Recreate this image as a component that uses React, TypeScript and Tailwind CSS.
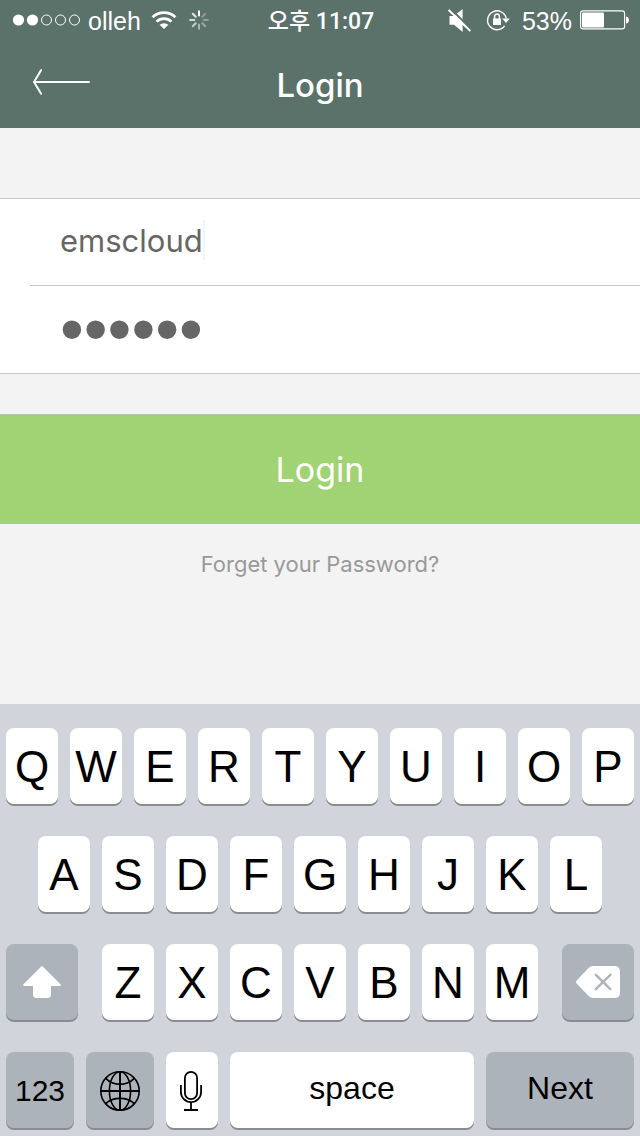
import { useState } from "react";
import type { ReactNode } from "react";

const spokes = [
  { angle: 0, opacity: 1 },
  { angle: 45, opacity: 0.3 },
  { angle: 90, opacity: 0.35 },
  { angle: 135, opacity: 0.4 },
  { angle: 180, opacity: 0.5 },
  { angle: 225, opacity: 0.65 },
  { angle: 270, opacity: 0.75 },
  { angle: 315, opacity: 0.85 },
];

function SignalDots() {
  return (
    <svg className="h-3 w-[68px]" viewBox="0 0 68 12" fill="none" stroke="currentColor" aria-hidden="true">
      <circle cx="6.5" cy="6" r="5.6" fill="currentColor" stroke="none" />
      <circle cx="20.5" cy="6" r="5.6" fill="currentColor" stroke="none" />
      <circle cx="34.5" cy="6" r="5" />
      <circle cx="48.5" cy="6" r="5" />
      <circle cx="62.5" cy="6" r="5" />
    </svg>
  );
}

function WifiIcon() {
  return (
    <svg className="h-[18px] w-[26px]" viewBox="0 0 26 18" fill="none" stroke="currentColor" aria-hidden="true">
      <path d="M1.6 6.2A16.5 16.5 0 0 1 24.4 6.2" strokeWidth="2.9" />
      <path d="M5.6 10.6A10.8 10.8 0 0 1 20.4 10.6" strokeWidth="2.6" />
      <path d="M13 18L8.6 13.8A6.8 6.8 0 0 1 17.4 13.8Z" fill="currentColor" stroke="none" />
    </svg>
  );
}

function SpinnerIcon() {
  return (
    <svg className="size-5" viewBox="0 0 20 20" stroke="currentColor" strokeWidth="2" strokeLinecap="round" aria-hidden="true">
      {spokes.map((s) => (
        <path key={s.angle} d="M10 1.2V5.4" opacity={s.opacity} transform={`rotate(${s.angle} 10 10)`} />
      ))}
    </svg>
  );
}

function MuteIcon() {
  return (
    <svg className="h-[23px] w-6" viewBox="0 0 24 23" aria-hidden="true">
      <path d="M1.5 7H6L14.6 0V23L6 15.8H1.5Z" fill="currentColor" />
      <path d="M1.6 -1L24 20.6" stroke="#5b726b" strokeWidth="2" />
      <path d="M0.6 1L22.4 22" stroke="currentColor" strokeWidth="2" />
    </svg>
  );
}

function RotationLockIcon() {
  return (
    <svg className="h-[22px] w-6" viewBox="0 0 24 22" fill="none" aria-hidden="true">
      <path d="M20.2 9.4A9.4 9.4 0 1 0 18.6 16.8" stroke="currentColor" strokeWidth="1.4" />
      <path d="M16.2 9.6H23.8L20 14Z" fill="currentColor" />
      <rect x="7" y="9.6" width="8" height="6.4" rx="0.6" fill="currentColor" />
      <path d="M8.6 10V7.6A2.4 2.6 0 0 1 13.4 7.6V10" stroke="currentColor" strokeWidth="1.5" />
    </svg>
  );
}

function BatteryIcon() {
  return (
    <svg className="h-5 w-[50px]" viewBox="0 0 50 20" fill="none" aria-hidden="true">
      <rect x="0.6" y="0.9" width="44" height="18" rx="2.4" stroke="currentColor" strokeWidth="1.1" />
      <rect x="2" y="2.4" width="22" height="15" rx="1" fill="currentColor" />
      <path d="M46 6.4C50 7 50 13 46 13.6Z" fill="currentColor" />
    </svg>
  );
}

function BackArrow() {
  return (
    <svg className="h-[26px] w-[58px]" viewBox="0 0 58 26" fill="none" stroke="currentColor" strokeWidth="2" strokeLinecap="round" strokeLinejoin="round" aria-hidden="true">
      <path d="M57 13H2M9 1.2L2 13L9 24.6" />
    </svg>
  );
}

function ShiftIcon() {
  return (
    <svg className="h-8 w-10" viewBox="0 0 40 32" fill="#fff" aria-hidden="true">
      <path d="M19.3 0.4Q20 -0.2 20.7 0.4L38.7 18.4Q39.4 20 37.6 20H29V28.6Q29 32 25.6 32H14.4Q11 32 11 28.6V20H2.4Q0.6 20 1.3 18.4Z" />
    </svg>
  );
}

function DeleteIcon() {
  return (
    <svg className="h-8 w-11" viewBox="0 0 44 32" fill="none" aria-hidden="true">
      <path d="M0.6 17.4Q-0.4 16 0.6 14.6L12.6 2Q14.4 0 17 0H38.5Q44 0 44 5.5V26.5Q44 32 38.5 32H17Q14.4 32 12.6 30Z" fill="#fff" />
      <path d="M19.8 8.8L34.4 23.2M34.4 8.8L19.8 23.2" stroke="#b0b3b8" strokeWidth="2.4" strokeLinecap="round" />
    </svg>
  );
}

function GlobeIcon() {
  return (
    <svg className="size-10" viewBox="0 0 40 40" fill="none" stroke="currentColor" strokeWidth="1.6" aria-hidden="true">
      <circle cx="20" cy="20" r="19.2" />
      <path d="M20 0.8V39.2M0.8 20H39.2" strokeWidth="2" />
      <ellipse cx="20" cy="20" rx="10.6" ry="19.2" />
      <path d="M5.8 7.4C13 15.2 27 15.2 34.2 7.4M5.8 32.6C13 25.6 27 25.6 34.2 32.6" />
    </svg>
  );
}

function MicIcon() {
  return (
    <svg className="h-10 w-6" viewBox="0 0 24 40" fill="none" stroke="currentColor" strokeWidth="1.8" aria-hidden="true">
      <rect x="4.9" y="0.9" width="12.2" height="27.2" rx="6.1" />
      <path d="M0.9 14V21A10.1 10.1 0 0 0 21.1 21V14" />
      <path d="M11 31V39M4 39H18" />
    </svg>
  );
}

type KeyProps = { children: ReactNode; width: string; label?: string; dark?: boolean };

function Key({ children, width, label, dark = false }: KeyProps) {
  return (
    <button
      type="button"
      aria-label={label}
      className={`${width} flex h-[76px] min-w-0 items-center justify-center rounded-lg text-black shadow-[0_2px_0_#898c90] ${dark ? "bg-[#acb3bb]" : "bg-white"}`}
    >
      {children}
    </button>
  );
}

function LetterKeys({ letters }: { letters: string }) {
  return (
    <>
      {letters.split("").map((letter) => (
        <Key key={letter} width="flex-1">
          <span className="pt-0.5 text-[44px] leading-none">{letter}</span>
        </Key>
      ))}
    </>
  );
}

function Keyboard() {
  return (
    <section aria-label="Keyboard" className="flex flex-col gap-8 bg-[#d1d5db] px-1.5 pt-6 pb-2 font-['Liberation_Sans',Arial,sans-serif]">
      <div className="flex gap-3">
        <LetterKeys letters="QWERTYUIOP" />
      </div>
      <div className="flex gap-3 px-8">
        <LetterKeys letters="ASDFGHJKL" />
      </div>
      <div className="flex gap-6">
        <Key width="flex-[72]" label="Shift" dark>
          <ShiftIcon />
        </Key>
        <div className="flex flex-[436] gap-3">
          <LetterKeys letters="ZXCVBNM" />
        </div>
        <Key width="flex-[72]" label="Delete" dark>
          <DeleteIcon />
        </Key>
      </div>
      <div className="flex gap-3">
        <Key width="flex-[68]" dark>
          <span className="pt-0.5 text-[30px] leading-none">123</span>
        </Key>
        <Key width="flex-[68]" label="Next keyboard" dark>
          <span className="pt-0.5">
            <GlobeIcon />
          </span>
        </Key>
        <Key width="flex-[52]" label="Dictate">
          <span className="pt-0.5">
            <MicIcon />
          </span>
        </Key>
        <Key width="flex-[244]">
          <span className="pb-1 text-[32px] leading-none">space</span>
        </Key>
        <Key width="flex-[148]" dark>
          <span className="pb-1 text-[32px] leading-none">Next</span>
        </Key>
      </div>
    </section>
  );
}

export default function App() {
  const [user, setUser] = useState("emscloud");
  const [password, setPassword] = useState("secret");

  return (
    <div className="flex min-h-screen flex-col bg-[#f3f3f3] font-['Inter','Noto_Sans_CJK_KR',sans-serif]">
      <header className="bg-[#5b726b] text-white">
        <div className="flex h-10 items-center pr-2.5 pl-3 font-['Liberation_Sans','Noto_Sans_CJK_KR',sans-serif] text-[25px] leading-9">
          <div className="flex flex-1 items-center">
            <SignalDots />
            <span className="pt-0.5 pr-2.5 pl-2">olleh</span>
            <WifiIcon />
            <span className="pl-3">
              <SpinnerIcon />
            </span>
          </div>
          <time className="pt-1 font-['Roboto','Noto_Sans_CJK_KR',sans-serif] text-[23px] font-medium">오후 11:07</time>
          <div className="flex flex-1 items-center justify-end">
            <MuteIcon />
            <span className="pr-3 pl-3.5">
              <RotationLockIcon />
            </span>
            <span className="pt-0.5 pr-2">53%</span>
            <BatteryIcon />
          </div>
        </div>
        <div className="grid h-[88px] grid-cols-[1fr_auto_1fr] items-center px-8">
          <button type="button" aria-label="Back" className="justify-self-start pb-1">
            <BackArrow />
          </button>
          <h1 className="pt-0.5 text-[33px] leading-10 font-medium">Login</h1>
        </div>
      </header>

      <main className="flex-1 pt-[70px]">
        <form onSubmit={(e) => e.preventDefault()}>
          <div className="border-y border-[#c8c8c8] bg-white pl-[30px] text-[#666]">
            <div className="flex h-[87px] items-center border-b border-[#c8c8c8] pb-1 pl-[30px]">
              <input
                type="text"
                aria-label="Username"
                value={user}
                onChange={(e) => setUser(e.target.value)}
                className="field-sizing-content h-12 text-[31px] outline-none"
              />
              <span className="h-10 w-0.5 bg-[#eef5fb]" />
            </div>
            <div className="flex h-[87px] items-center pb-1 pl-[30px]">
              <input
                type="password"
                aria-label="Password"
                value={password}
                onChange={(e) => setPassword(e.target.value)}
                className="h-20 w-full min-w-0 flex-1 font-['Liberation_Sans',Arial,sans-serif] text-[68px] leading-[80px] outline-none"
              />
            </div>
          </div>
          <button
            type="submit"
            className="mt-10 h-[110px] w-full border-t border-[#b9c2ae] bg-[#a0d373] text-[34px] text-white"
          >
            Login
          </button>
        </form>
        <p className="pt-6 text-center text-[22px] leading-8 text-[#999]">
          <a href="#forgot">Forget your Password?</a>
        </p>
      </main>

      <Keyboard />
    </div>
  );
}
